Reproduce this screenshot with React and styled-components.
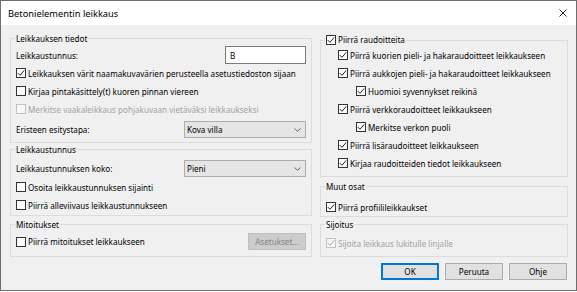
import React from "react";
import styled, { createGlobalStyle } from "styled-components";

const GlobalStyle = createGlobalStyle`
  html, body { margin: 0; padding: 0; background: #ffffff; }
  body { font-family: "Noto Sans", "Open Sans", sans-serif; }
`;

const Window = styled.div`
  box-sizing: border-box;
  width: 577px;
  height: 291px;
  border: 1px solid #6e6e6e;
  background: #f0f0f0;
  display: flex;
  flex-direction: column;
  font-family: "Noto Sans", "Open Sans", sans-serif;
  font-size: 8.1px;
  color: #000;
  overflow: hidden;
`;

const TitleBar = styled.div`
  height: 24px;
  flex: none;
  background: #ffffff;
  display: flex;
  align-items: center;
  justify-content: space-between;
  padding: 0 9px 0 7px;
`;

const Title = styled.span`
  font-size: 9.3px;
  color: #000;
`;

const Body = styled.div`
  display: grid;
  grid-template-columns: 302px 248px;
  column-gap: 8px;
  align-items: start;
  padding: 8px 8px 0 9px;
`;

const Column = styled.div`
  display: flex;
  flex-direction: column;
  padding-top: ${(p) => p.$pt || 0}px;
`;

const Group = styled.fieldset`
  margin: ${(p) => p.$mt || 0}px 0 0 0;
  padding: ${(p) => p.$pt || 0}px 5px ${(p) => p.$pb || 0}px 5px;
  border: 1px solid #dcdcdc;
  min-width: 0;
  display: flex;
  flex-direction: column;
`;

const Legend = styled.legend`
  padding: 0 1px;
  margin-left: -1px;
  line-height: ${(p) => p.$lh || 11}px;
  height: ${(p) => p.$lh || 11}px;
  display: flex;
  align-items: center;
  color: #000;
`;

const Row = styled.div`
  display: flex;
  align-items: center;
  justify-content: space-between;
  height: ${(p) => p.$h || 18}px;
  margin-top: ${(p) => p.$mt || 0}px;
  padding-left: ${(p) => p.$indent || 0}px;
  white-space: nowrap;
`;

const CheckLabel = styled.label`
  display: flex;
  align-items: center;
  color: ${(p) => (p.$disabled ? "#a3a3a3" : "#000")};
`;

const Box = styled.span`
  box-sizing: border-box;
  width: 10px;
  height: 10px;
  flex: none;
  margin-right: 2px;
  border: 1px solid ${(p) => (p.$disabled ? "#c2c2c2" : "#333333")};
  background: ${(p) => (p.$disabled ? "#f7f7f7" : "#ffffff")};
  display: inline-flex;
  align-items: center;
  justify-content: center;
`;

const Text = styled.span`
  color: #000;
`;

const TextBox = styled.div`
  box-sizing: border-box;
  width: 81px;
  height: 18px;
  border: 1px solid #7a7a7a;
  background: #ffffff;
  display: flex;
  align-items: center;
  padding-left: 4px;
`;

const Combo = styled.div`
  box-sizing: border-box;
  width: 122px;
  height: 17px;
  border: 1px solid #adadad;
  background: #e5e5e5;
  display: flex;
  align-items: center;
  justify-content: space-between;
  padding: 0 4px 0 2px;
`;

const Button = styled.div`
  box-sizing: border-box;
  width: ${(p) => p.$w || 58}px;
  height: 17px;
  display: flex;
  align-items: center;
  justify-content: center;
  border: 1px solid ${(p) => (p.$default ? "#0078d7" : p.$disabled ? "#bfbfbf" : "#adadad")};
  background: ${(p) => (p.$disabled ? "#cccccc" : "#e1e1e1")};
  color: ${(p) => (p.$disabled ? "#838383" : "#000")};
  ${(p) => (p.$default ? "box-shadow: inset 0 0 0 1px #0078d7;" : "")}
`;

const ButtonBar = styled.div`
  grid-column: 1 / -1;
  display: flex;
  justify-content: flex-end;
  gap: 6px;
  margin-top: 6px;
  padding-right: 1px;
`;

function CheckMark({ disabled }) {
  return (
    <svg width="8" height="8" viewBox="0 0 8 8">
      <polyline
        points="0.8,4.1 3,6.3 7.2,1.4"
        fill="none"
        stroke={disabled ? "#a8a8a8" : "#222"}
        strokeWidth="1"
      />
    </svg>
  );
}

function Check({ checked, disabled, children }) {
  return (
    <CheckLabel $disabled={disabled}>
      <Box $disabled={disabled}>{checked && <CheckMark disabled={disabled} />}</Box>
      {children}
    </CheckLabel>
  );
}

function Chevron() {
  return (
    <svg width="7" height="4" viewBox="0 0 7 4">
      <polyline points="0.5,0.5 3.5,3.3 6.5,0.5" fill="none" stroke="#555" strokeWidth="0.9" />
    </svg>
  );
}

function CloseIcon() {
  return (
    <svg width="8" height="8" viewBox="0 0 8 8">
      <path d="M0.5 0.5 L7.5 7.5 M7.5 0.5 L0.5 7.5" stroke="#111" strokeWidth="0.9" />
    </svg>
  );
}

export default function App() {
  return (
    <>
      <GlobalStyle />
      <Window>
        <TitleBar>
          <Title>Betonielementin leikkaus</Title>
          <CloseIcon />
        </TitleBar>
        <Body>
          <Column>
            <Group $pt={2} $pb={4}>
              <Legend>Leikkauksen tiedot</Legend>
              <Row>
                <Text>Leikkaustunnus:</Text>
                <TextBox>B</TextBox>
              </Row>
              <Row>
                <Check checked>Leikkauksen värit naamakuvavärien perusteella asetustiedoston sijaan</Check>
              </Row>
              <Row>
                <Check>Kirjaa pintakäsittely(t) kuoren pinnan viereen</Check>
              </Row>
              <Row>
                <Check disabled>Merkitse vaakaleikkaus pohjakuvaan vietäväksi leikkaukseksi</Check>
              </Row>
              <Row $h={17} $mt={3}>
                <Text>Eristeen esitystapa:</Text>
                <Combo>
                  <span>Kova villa</span>
                  <Chevron />
                </Combo>
              </Row>
            </Group>
            <Group $mt={1} $pt={4} $pb={1}>
              <Legend>Leikkaustunnus</Legend>
              <Row $h={19}>
                <Text>Leikkaustunnuksen koko:</Text>
                <Combo>
                  <span>Pieni</span>
                  <Chevron />
                </Combo>
              </Row>
              <Row>
                <Check>Osoita leikkaustunnuksen sijainti</Check>
              </Row>
              <Row>
                <Check>Piirrä alleviivaus leikkaustunnukseen</Check>
              </Row>
            </Group>
            <Group $mt={3} $pt={2} $pb={5}>
              <Legend>Mitoitukset</Legend>
              <Row $h={19}>
                <Check>Piirrä mitoitukset leikkaukseen</Check>
                <Button $disabled $w={58}>Asetukset...</Button>
              </Row>
            </Group>
          </Column>
          <Column $pt={1}>
            <Group $pt={0} $pb={4}>
              <Legend $lh={12}>
                <Check checked>Piirrä raudoitteita</Check>
              </Legend>
              <Row $indent={12}>
                <Check checked>Piirrä kuorien pieli- ja hakaraudoitteet leikkaukseen</Check>
              </Row>
              <Row $indent={12}>
                <Check checked>Piirrä aukkojen pieli- ja hakaraudoitteet leikkaukseen</Check>
              </Row>
              <Row $indent={30}>
                <Check checked>Huomioi syvennykset reikinä</Check>
              </Row>
              <Row $indent={12}>
                <Check checked>Piirrä verkkoraudoitteet leikkaukseen</Check>
              </Row>
              <Row $indent={30}>
                <Check checked>Merkitse verkon puoli</Check>
              </Row>
              <Row $indent={12}>
                <Check checked>Piirrä lisäraudoitteet leikkaukseen</Check>
              </Row>
              <Row $indent={12}>
                <Check checked>Kirjaa raudoitteiden tiedot leikkaukseen</Check>
              </Row>
            </Group>
            <Group $mt={4} $pt={6} $pb={0}>
              <Legend>Muut osat</Legend>
              <Row>
                <Check checked>Piirrä profiilileikkaukset</Check>
              </Row>
            </Group>
            <Group $mt={2} $pt={4} $pb={4}>
              <Legend>Sijoitus</Legend>
              <Row>
                <Check checked disabled>Sijoita leikkaus lukitulle linjalle</Check>
              </Row>
            </Group>
          </Column>
          <ButtonBar>
            <Button $default>OK</Button>
            <Button>Peruuta</Button>
            <Button>Ohje</Button>
          </ButtonBar>
        </Body>
      </Window>
    </>
  );
}
